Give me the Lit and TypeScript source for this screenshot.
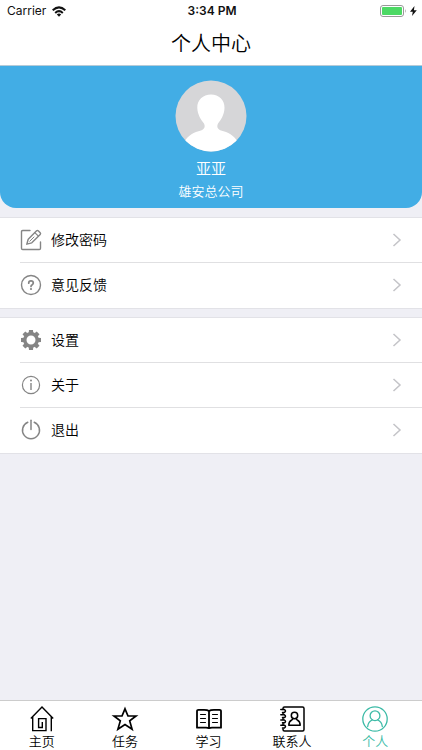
import { LitElement, html, svg, css, TemplateResult } from "lit";
import { customElement, property, state } from "lit/decorators.js";
import { classMap } from "lit/directives/class-map.js";

const frame = (box: number, body: TemplateResult) => html`
  <svg viewBox="0 0 ${box} ${box}" width=${box} height=${box} fill="none"
    stroke="currentColor" stroke-linejoin="round" stroke-linecap="round" aria-hidden="true">${body}</svg>`;

const teeth = [0, 45, 90, 135, 180, 225, 270, 315];

/* Row icons are drawn on a 22px grid. */
const rowIcons: Record<string, TemplateResult> = {
  edit: svg`<g stroke-width="1.4">
    <path d="M10 1.500H2.700Q1.500 1.500 1.500 2.700V19.300Q1.500 20.500 2.700 20.500H19.300Q20.500 20.500 20.500 19.300V13"/>
    <path d="M6.800 15.200 8.200 10.200 16.600 1.800Q17.400 1 18.200 1.800L20.200 3.800Q21 4.600 20.200 5.400L11.800 13.800Z"/>
    <path stroke-width="1.200" d="M14.800 3.600 18.400 7.200"/><path stroke-width="1" d="M9.800 12.200 14 8"/></g>`,
  help: svg`<g stroke-width="1.4"><circle cx="11" cy="11" r="9.500"/>
    <path stroke-width="1.700" d="M8.700 9.200Q8.700 6.900 11 6.900T13.300 9Q13.300 10 12.200 10.700Q11 11.400 11 12.500"/>
    <circle cx="11" cy="15" r="1.100" fill="currentColor" stroke="none"/></g>`,
  gear: svg`<circle cx="11" cy="11" r="6.200" stroke-width="3.400"/>
    <g fill="currentColor" stroke="none">${teeth.map(
      (a) => svg`<path transform="rotate(${a} 11 11)" d="M8.700 4.200 9 1H13L13.300 4.200Z"/>`
    )}</g>`,
  info: svg`<g stroke-width="1.200"><circle cx="11" cy="11" r="8.600"/>
    <path stroke-width="1.400" stroke-linecap="butt" d="M11 9V16"/>
    <circle cx="11" cy="6.600" r="1" fill="currentColor" stroke="none"/></g>`,
  power: svg`<g stroke-width="1.500"><path d="M7.800 3.300A8.500 8.500 0 1 0 14.200 3.300"/>
    <path d="M11 1.300V10.500"/></g>`,
};

/* Tab icons are drawn on a 28px grid. */
const tabIcons: Record<string, TemplateResult> = {
  home: svg`<g stroke-width="1.400" stroke-linejoin="miter" stroke-linecap="butt">
    <path d="M2.800 13.500 14 1.900 25.200 13.500"/><path d="M23.300 12V26.300"/>
    <path d="M4.700 12V25.600H18V13.600H10.600V22.500H14.300V17"/></g>`,
  star: svg`<path stroke-width="1.700" stroke-linejoin="miter"
    d="M14 3.800 17 11H25L18.700 15.900 21.100 24.300 14 19.600 6.900 24.300 9.300 15.900 3 11H11Z"/>`,
  book: svg`<g stroke-width="1.800"><path d="M14 6Q12.500 4.800 9 4.800H3.500Q2 4.800 2 6.300V22.700H11Q13 22.700 14 23.200Q15 22.700 17 22.700H26V6.300Q26 4.800 24.500 4.800H19Q15.500 4.800 14 6V23.200"/></g>
    <path stroke-width="1" d="M5.500 9.500H10.500M5.500 13.500H10.500M5.500 17.500H10.500M17.500 9.500H22.500M17.500 13.500H22.500M17.500 17.500H22.500"/>`,
  contacts: svg`<g stroke-width="1.500">
    <path d="M5 4.500V3.500Q5 2 6.500 2H24.500Q26 2 26 3.500V24.500Q26 26 24.500 26H6.500Q5 26 5 24.500V24"/>
    <path stroke-width="1.500" d="M2.800 4.600H6.500Q8.500 6 6.500 7.400H4.500M5 7.400V9.400M2.800 9.800H6.500Q8.500 11.200 6.500 12.600H4.500M5 12.600V14.600M2.800 15H6.500Q8.500 16.400 6.500 17.800H4.500M5 17.800V19.800M2.800 20.200H6.500Q8.500 21.600 6.500 23H4.500"/>
    <circle cx="16.500" cy="10.500" r="3.200"/>
    <path d="M14.800 13.400Q14.800 14.500 13.700 15Q10.800 16.300 10.800 20.300H22.200Q22.200 16.300 19.300 15Q18.200 14.500 18.200 13.400"/></g>`,
  person: svg`<g stroke-width="1.300"><circle cx="14" cy="14" r="12.200"/><circle cx="14" cy="10.700" r="4.900"/>
    <path d="M11.300 15Q7.300 16.500 6.700 21.500M16.700 15Q20.700 16.500 21.300 21.500"/></g>`,
};

@customElement("status-bar")
class StatusBar extends LitElement {
  static styles = css`
    :host { display: grid; grid-template-columns: 1fr auto 1fr; align-items: center; height: 22px;
      padding: 0 5px 0 7px; font: 12px/22px Inter, "Liberation Sans", sans-serif; color: #111; }
    .side { display: flex; align-items: center; gap: 6px; }
    .end { justify-content: flex-end; gap: 3px; }
    .time { font-weight: 600; }
    svg { display: block; }
  `;
  render() {
    return html`
      <div class="side"><span>Carrier</span>
        <svg width="14" height="11" viewBox="0 0 14 11" fill="none" stroke="#111" stroke-width="2" aria-hidden="true">
          <path d="M.7 4.300Q7-1.500 13.300 4.300M3.200 6.900Q7 3.300 10.800 6.900"/>
          <path fill="#111" stroke="none" d="M4.800 8.400Q7 6.600 9.200 8.400L7 10.700Z"/>
        </svg></div>
      <span class="time">3:34 PM</span>
      <div class="side end">
        <svg width="27" height="12" viewBox="0 0 27 12" aria-hidden="true">
          <rect x=".5" y=".5" width="23" height="11" rx="2.500" fill="none" stroke="#999"/>
          <rect x="2" y="2" width="20" height="8" rx="1" fill="#4cd964"/>
          <path d="M25 4Q26.500 6 25 8Z" fill="#999"/>
        </svg>
        <svg width="7" height="10" viewBox="0 0 7 10" aria-hidden="true"><path fill="#111" d="M4.500 0 0 5.700H2.800L2 10 6.800 4.200H3.900Z"/></svg>
      </div>`;
  }
}

@customElement("menu-row")
class MenuRow extends LitElement {
  @property() icon = "";
  @property() label = "";
  static styles = css`
    :host { display: block; padding-left: 20px; background: #fff; }
    .row { display: flex; align-items: center; box-sizing: border-box; width: 100%; height: 45px;
      padding: 0 20px 0 0; border: 0; border-bottom: 1px solid #e0e0e2;
      background: none; font: inherit; color: #000; text-align: left; cursor: pointer; }
    :host(:last-child) .row { border-color: transparent; }
    .icon { display: flex; width: 31px; color: #858585; }
    .text { flex: 1; font-size: 14px; line-height: 20px; }
    .arrow { color: #c4c4c8; }
  `;
  render() {
    return html`<button class="row" type="button">
      <span class="icon">${frame(22, rowIcons[this.icon])}</span>
      <span class="text">${this.label}</span>
      <svg class="arrow" width="10" height="14" viewBox="0 0 10 14" fill="none" stroke="currentColor" stroke-width="1.500" aria-hidden="true">
        <path d="M1.500 1 8 7 1.500 13"/></svg>
    </button>`;
  }
}

@customElement("app-root")
class AppRoot extends LitElement {
  @state() private active = "person";

  private groups = [
    [["edit", "修改密码"], ["help", "意见反馈"]],
    [["gear", "设置"], ["info", "关于"], ["power", "退出"]],
  ];
  private tabs = [["home", "主页"], ["star", "任务"], ["book", "学习"], ["contacts", "联系人"], ["person", "个人"]];

  static styles = css`
    :host { display: flex; flex-direction: column; min-height: 100vh; background: #efeff5; color: #000;
      font-family: Inter, "Noto Sans CJK SC", sans-serif; font-weight: 350; }
    .top { background: #fff; border-bottom: 1px solid #b5cbd8; }
    .title { margin: 0; padding-top: 2px; font-size: 20px; font-weight: 350; line-height: 41px; text-align: center; }
    .profile { display: flex; flex-direction: column; align-items: center; padding: 14px 0 7px;
      background: #42ade5; border-radius: 0 0 16px 16px; color: #fff; }
    .avatar { display: block; margin-bottom: 5px; }
    .name { margin: 0; font-size: 15px; font-weight: 350; line-height: 24px; }
    .company { margin: 0; font-size: 13px; line-height: 20px; }
    .content { flex: 1; }
    .group { margin-top: 10px; background: #fff; box-shadow: 0 0 0 1px #e2e2e7; }
    .tabs { display: flex; height: 49px; padding-right: 5px; background: #fff; border-top: 1px solid #ccc; }
    .tab { display: flex; flex-direction: column; align-items: center; flex: 1; padding: 4px 0 0; border: 0;
      background: none; font: inherit; font-size: 13px; line-height: 16px; color: #000; cursor: pointer; }
    .tab.active { color: #3dbba7; }
    .tab svg { display: block; flex: none; }
  `;

  render() {
    return html`
      <header class="top"><status-bar></status-bar><h1 class="title">个人中心</h1></header>
      <main class="content">
        <section class="profile">
          <svg class="avatar" width="72" height="72" viewBox="0 0 72 72" role="img" aria-label="头像">
            <defs><clipPath id="disc"><circle cx="36" cy="36" r="35.500"/></clipPath></defs>
            <g clip-path="url(#disc)"><rect width="72" height="72" fill="#d6d6d8"/>
              <path fill="#fff" d="M36 14.500C44 14.500 49.700 20 49.500 28C49.300 34.500 46 40 43 43.500C41.500 47 42.500 49 46 50.500C53 52 59 55.500 62 61V72H10V61C13 55.500 19 52 26 50.500C29.500 49 30.500 47 29 43.500C26 40 22.500 34.500 22.300 28C22 20 28 14.500 36 14.500Z"/>
            </g></svg>
          <h2 class="name">亚亚</h2>
          <p class="company">雄安总公司</p>
        </section>
        ${this.groups.map((rows) => html`<section class="group">
          ${rows.map(([icon, label]) => html`<menu-row icon=${icon} label=${label}></menu-row>`)}</section>`)}
      </main>
      <nav class="tabs">
        ${this.tabs.map(([id, label]) => html`<button type="button"
          class=${classMap({ tab: true, active: id === this.active })}
          @click=${() => (this.active = id)}>${frame(28, tabIcons[id])}<span>${label}</span></button>`)}
      </nav>`;
  }
}
